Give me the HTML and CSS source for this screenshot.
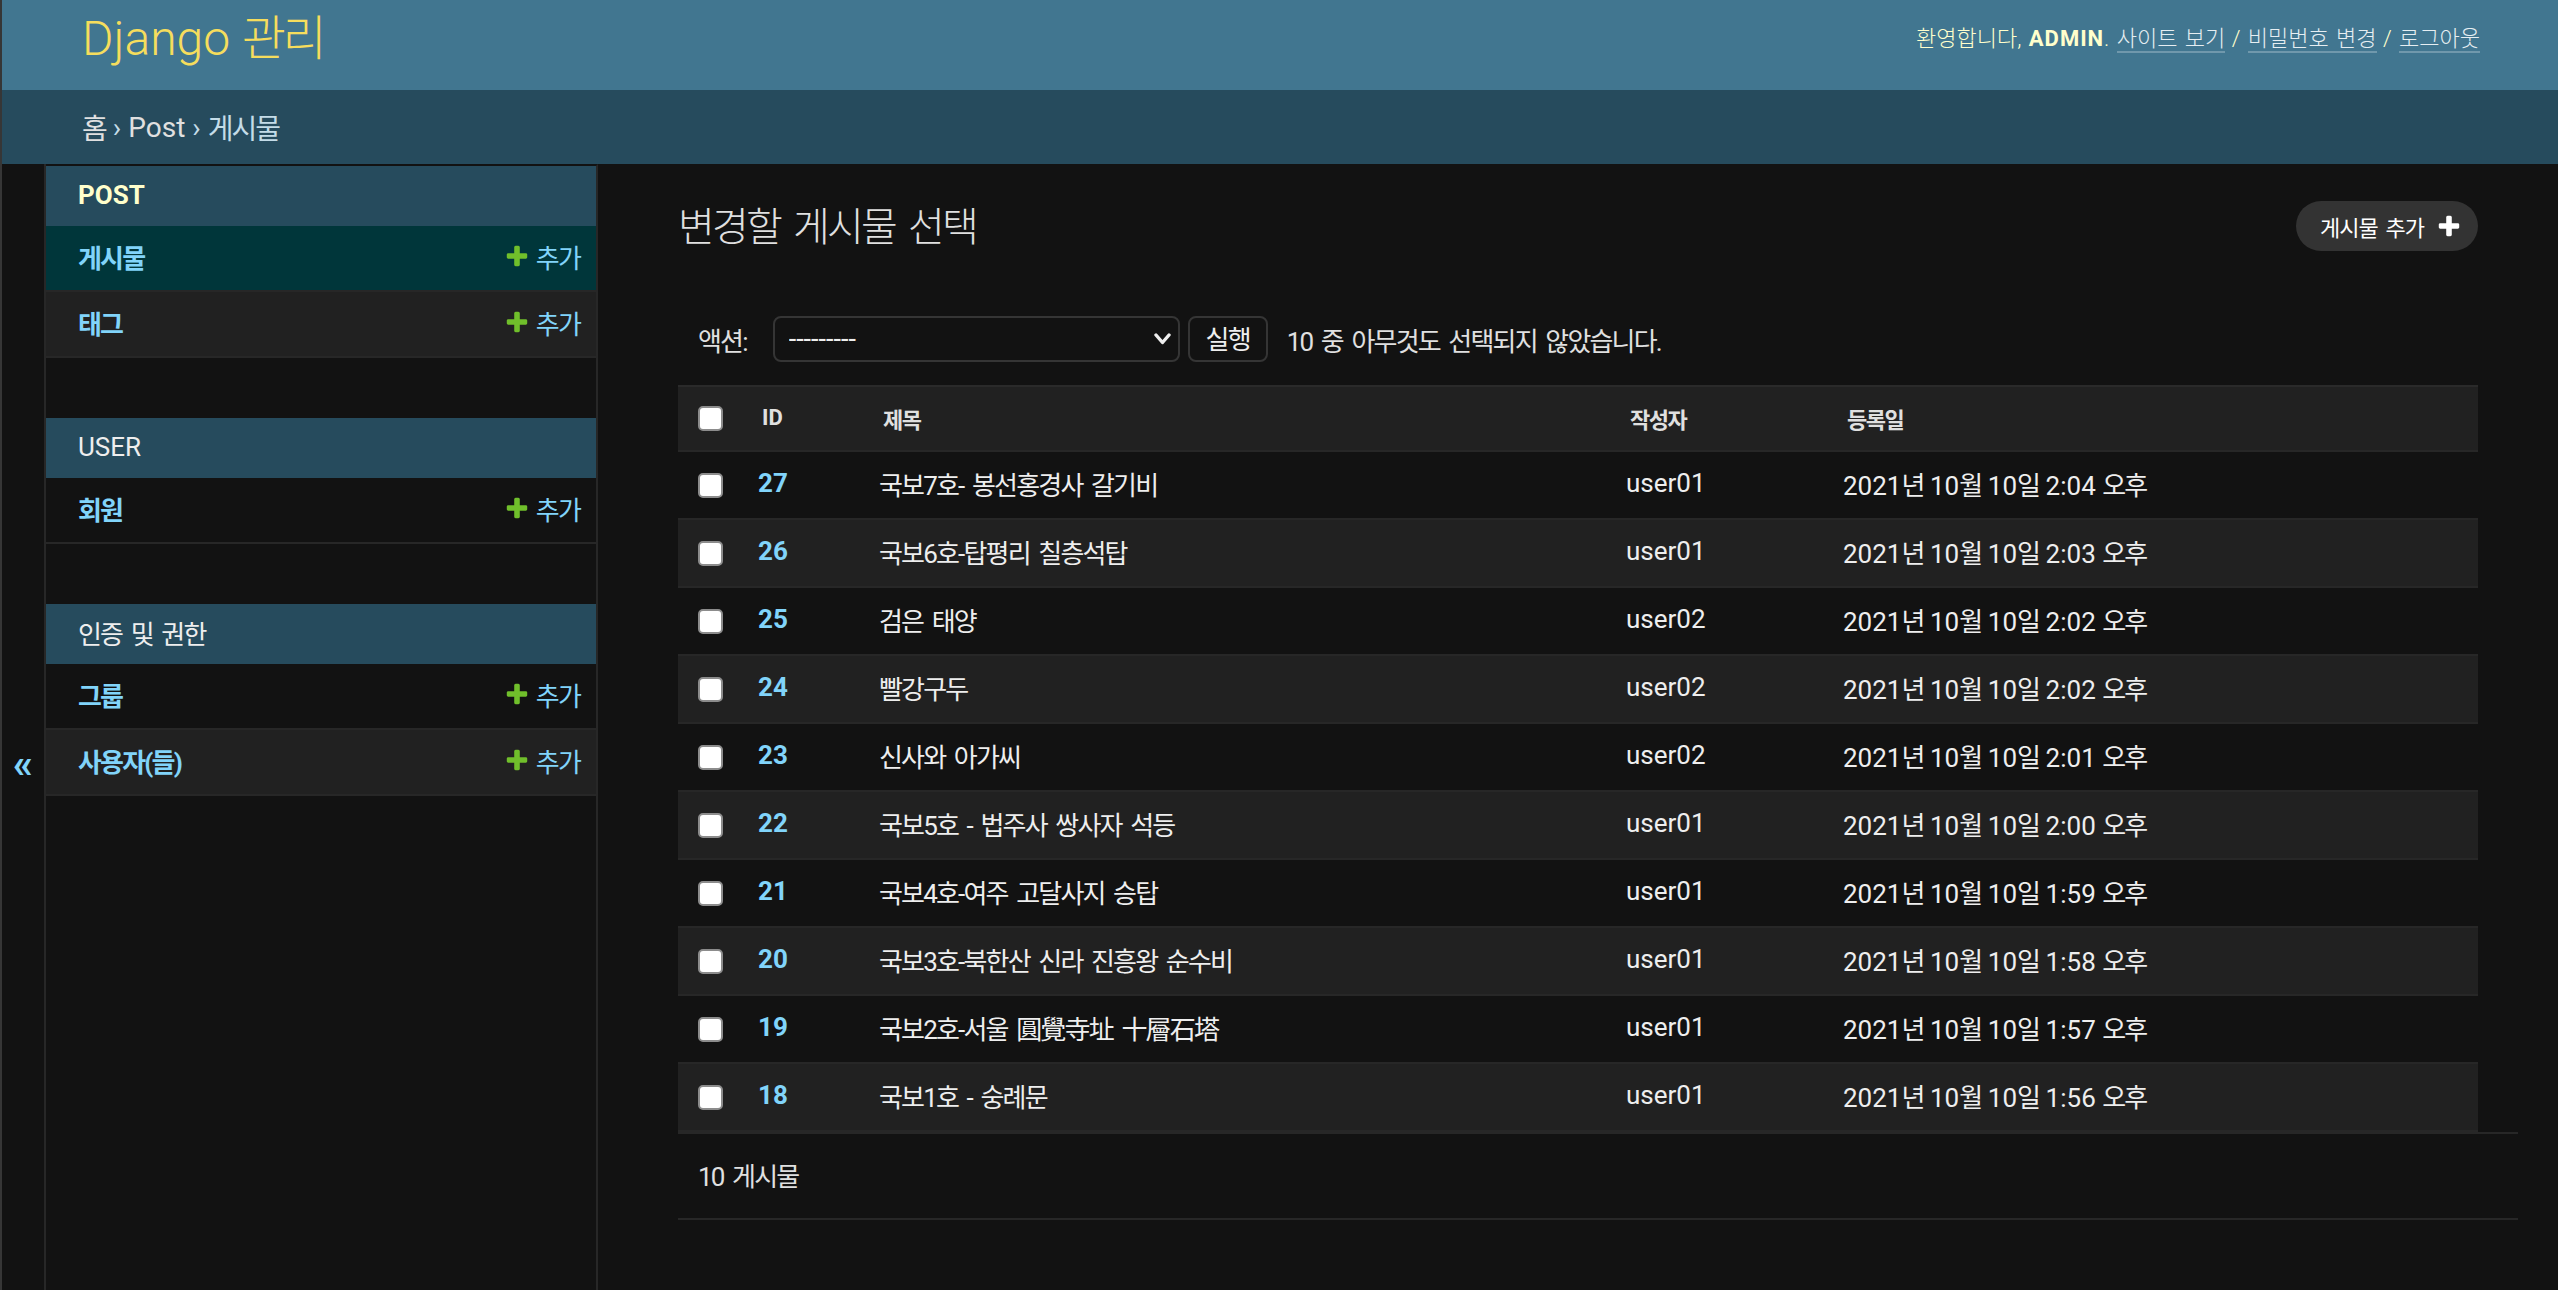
FILE: index.html
```html
<!DOCTYPE html>
<html lang="ko">
<head>
<meta charset="utf-8">
<title>변경할 게시물 선택 | Django 사이트 관리</title>
<link rel="stylesheet" href="styles.css">
</head>
<body>
<div class="page">
  <header class="header">
    <h1 class="site-name"><a href="#">Django <span class="ko">관리</span></a></h1>
    <div class="user-tools">
      <span class="ko">환영합니다</span>, <strong>admin</strong>. <a href="#"><span class="ko">사이트 보기</span></a> / <a href="#"><span class="ko">비밀번호 변경</span></a> / <a href="#"><span class="ko">로그아웃</span></a>
    </div>
  </header>
  <nav class="breadcrumbs">
    <a href="#" class="ko">홈</a><span class="sep">›</span><a href="#">Post</a><span class="sep">›</span><span class="ko crumb-current">게시물</span>
  </nav>
  <div class="main">
    <button class="toggle-nav" type="button">«</button>
    <nav class="sidebar">
      <div class="module current-app">
        <div class="caption"><a href="#" class="section">Post</a></div>
        <div class="model-row current">
          <a href="#" class="model-name ko">게시물</a>
          <a href="#" class="addlink"><svg viewBox="0 0 1792 1792" class="plus"><path fill="#70bf2b" d="M1600 796v192q0 40-28 68t-68 28h-416v416q0 40-28 68t-68 28h-192q-40 0-68-28t-28-68v-416h-416q-40 0-68-28t-28-68v-192q0-40 28-68t68-28h416v-416q0-40 28-68t68-28h192q40 0 68 28t28 68v416h416q40 0 68 28t28 68z"/></svg><span class="ko">추가</span></a>
        </div>
        <div class="model-row even">
          <a href="#" class="model-name ko">태그</a>
          <a href="#" class="addlink"><svg viewBox="0 0 1792 1792" class="plus"><path fill="#70bf2b" d="M1600 796v192q0 40-28 68t-68 28h-416v416q0 40-28 68t-68 28h-192q-40 0-68-28t-28-68v-416h-416q-40 0-68-28t-28-68v-192q0-40 28-68t68-28h416v-416q0-40 28-68t68-28h192q40 0 68 28t28 68v416h416q40 0 68 28t28 68z"/></svg><span class="ko">추가</span></a>
        </div>
      </div>
      <div class="module">
        <div class="caption"><a href="#" class="section">User</a></div>
        <div class="model-row">
          <a href="#" class="model-name ko">회원</a>
          <a href="#" class="addlink"><svg viewBox="0 0 1792 1792" class="plus"><path fill="#70bf2b" d="M1600 796v192q0 40-28 68t-68 28h-416v416q0 40-28 68t-68 28h-192q-40 0-68-28t-28-68v-416h-416q-40 0-68-28t-28-68v-192q0-40 28-68t68-28h416v-416q0-40 28-68t68-28h192q40 0 68 28t28 68v416h416q40 0 68 28t28 68z"/></svg><span class="ko">추가</span></a>
        </div>
      </div>
      <div class="module">
        <div class="caption"><a href="#" class="section ko">인증 및 권한</a></div>
        <div class="model-row">
          <a href="#" class="model-name ko">그룹</a>
          <a href="#" class="addlink"><svg viewBox="0 0 1792 1792" class="plus"><path fill="#70bf2b" d="M1600 796v192q0 40-28 68t-68 28h-416v416q0 40-28 68t-68 28h-192q-40 0-68-28t-28-68v-416h-416q-40 0-68-28t-28-68v-192q0-40 28-68t68-28h416v-416q0-40 28-68t68-28h192q40 0 68 28t28 68v416h416q40 0 68 28t28 68z"/></svg><span class="ko">추가</span></a>
        </div>
        <div class="model-row even">
          <a href="#" class="model-name ko">사용자(들)</a>
          <a href="#" class="addlink"><svg viewBox="0 0 1792 1792" class="plus"><path fill="#70bf2b" d="M1600 796v192q0 40-28 68t-68 28h-416v416q0 40-28 68t-68 28h-192q-40 0-68-28t-28-68v-416h-416q-40 0-68-28t-28-68v-192q0-40 28-68t68-28h416v-416q0-40 28-68t68-28h192q40 0 68 28t28 68v416h416q40 0 68 28t28 68z"/></svg><span class="ko">추가</span></a>
        </div>
      </div>
    </nav>
    <main class="content">
      <div class="content-head">
        <h1 class="title ko">변경할 게시물 선택</h1>
        <a href="#" class="object-tool"><span class="ko">게시물 추가</span><svg viewBox="0 0 1792 1792" class="plus-white"><path fill="#ffffff" d="M1600 796v192q0 40-28 68t-68 28h-416v416q0 40-28 68t-68 28h-192q-40 0-68-28t-28-68v-416h-416q-40 0-68-28t-28-68v-192q0-40 28-68t68-28h416v-416q0-40 28-68t68-28h192q40 0 68 28t28 68v416h416q40 0 68 28t28 68z"/></svg></a>
      </div>
      <form class="changelist">
        <div class="actions">
          <label class="ko">액션:</label>
          <div class="select-wrap">
            <select class="action-select">
              <option>---------</option>
              <option>선택된 게시물 들을 삭제합니다.</option>
            </select>
            <svg class="chevron" viewBox="0 0 17 12"><polyline points="2,2 8.5,9.5 15,2" fill="none" stroke="#eeeeee" stroke-width="3.4" stroke-linecap="round" stroke-linejoin="round"/></svg>
          </div>
          <button type="button" class="run ko">실행</button>
          <span class="counter ko">10 중 아무것도 선택되지 않았습니다.</span>
        </div>
        <table class="results">
          <thead>
            <tr>
              <th class="c-check"><input type="checkbox"></th>
              <th class="c-id">ID</th>
              <th class="c-title ko">제목</th>
              <th class="c-author ko">작성자</th>
              <th class="c-date ko">등록일</th>
            </tr>
          </thead>
          <tbody>
            <tr><td class="c-check"><input type="checkbox"></td><th class="c-id"><a href="#">27</a></th><td class="ko">국보7호- 봉선홍경사 갈기비</td><td>user01</td><td>2021<span class="ko">년</span> 10<span class="ko">월</span> 10<span class="ko">일</span> 2:04 <span class="ko">오후</span></td></tr>
            <tr><td class="c-check"><input type="checkbox"></td><th class="c-id"><a href="#">26</a></th><td class="ko">국보6호-탑평리 칠층석탑</td><td>user01</td><td>2021<span class="ko">년</span> 10<span class="ko">월</span> 10<span class="ko">일</span> 2:03 <span class="ko">오후</span></td></tr>
            <tr><td class="c-check"><input type="checkbox"></td><th class="c-id"><a href="#">25</a></th><td class="ko">검은 태양</td><td>user02</td><td>2021<span class="ko">년</span> 10<span class="ko">월</span> 10<span class="ko">일</span> 2:02 <span class="ko">오후</span></td></tr>
            <tr><td class="c-check"><input type="checkbox"></td><th class="c-id"><a href="#">24</a></th><td class="ko">빨강구두</td><td>user02</td><td>2021<span class="ko">년</span> 10<span class="ko">월</span> 10<span class="ko">일</span> 2:02 <span class="ko">오후</span></td></tr>
            <tr><td class="c-check"><input type="checkbox"></td><th class="c-id"><a href="#">23</a></th><td class="ko">신사와 아가씨</td><td>user02</td><td>2021<span class="ko">년</span> 10<span class="ko">월</span> 10<span class="ko">일</span> 2:01 <span class="ko">오후</span></td></tr>
            <tr><td class="c-check"><input type="checkbox"></td><th class="c-id"><a href="#">22</a></th><td class="ko">국보5호 - 법주사 쌍사자 석등</td><td>user01</td><td>2021<span class="ko">년</span> 10<span class="ko">월</span> 10<span class="ko">일</span> 2:00 <span class="ko">오후</span></td></tr>
            <tr><td class="c-check"><input type="checkbox"></td><th class="c-id"><a href="#">21</a></th><td class="ko">국보4호-여주 고달사지 승탑</td><td>user01</td><td>2021<span class="ko">년</span> 10<span class="ko">월</span> 10<span class="ko">일</span> 1:59 <span class="ko">오후</span></td></tr>
            <tr><td class="c-check"><input type="checkbox"></td><th class="c-id"><a href="#">20</a></th><td class="ko">국보3호-북한산 신라 진흥왕 순수비</td><td>user01</td><td>2021<span class="ko">년</span> 10<span class="ko">월</span> 10<span class="ko">일</span> 1:58 <span class="ko">오후</span></td></tr>
            <tr><td class="c-check"><input type="checkbox"></td><th class="c-id"><a href="#">19</a></th><td class="ko">국보2호-서울 圓覺寺址 十層石塔</td><td>user01</td><td>2021<span class="ko">년</span> 10<span class="ko">월</span> 10<span class="ko">일</span> 1:57 <span class="ko">오후</span></td></tr>
            <tr><td class="c-check"><input type="checkbox"></td><th class="c-id"><a href="#">18</a></th><td class="ko">국보1호 - 숭례문</td><td>user01</td><td>2021<span class="ko">년</span> 10<span class="ko">월</span> 10<span class="ko">일</span> 1:56 <span class="ko">오후</span></td></tr>
          </tbody>
        </table>
        <p class="paginator ko">10 게시물</p>
      </form>
    </main>
  </div>
</div>
</body>
</html>
```

FILE: styles.css
```css
* { box-sizing: border-box; }

html, body {
  margin: 0;
  padding: 0;
}

body {
  background: #121212;
  color: #eeeeee;
  font-family: Roboto, "Noto Sans CJK KR", "Noto Sans", sans-serif;
  font-size: 28px;
  overflow: hidden;
}

a {
  color: #81d4fa;
  text-decoration: none;
}

.ko {
  letter-spacing: -0.07em;
  word-spacing: 0.15em;
}

.page {
  height: 1290px;
  overflow: hidden;
  border-left: 2px solid #363636;
}

/* Header */
.header {
  height: 90px;
  background: #417690;
  display: flex;
  justify-content: space-between;
  align-items: center;
  padding: 0 78px 12px 80px;
}

.site-name {
  margin: 0;
  font-size: 48px;
  font-weight: 300;
  line-height: 56px;
}

.site-name a { color: #f5dd5d; }

.user-tools {
  font-size: 22px;
  font-weight: 300;
  letter-spacing: 1px;
  text-transform: uppercase;
  color: #ffffcc;
  line-height: 30px;
}

.user-tools .ko {
  letter-spacing: 0;
  word-spacing: 2px;
}

.user-tools strong { font-weight: 700; }

.user-tools a {
  color: #e6eef2;
  border-bottom: 2px solid rgba(255, 255, 255, 0.25);
}

/* Breadcrumbs */
.breadcrumbs {
  height: 74px;
  background: #264b5d;
  color: #c4dce8;
  display: flex;
  align-items: center;
  padding: 0 78px 0 80px;
  font-size: 28px;
}

.breadcrumbs a { color: #e0e0e0; }

.breadcrumbs .sep {
  margin: 0 7px;
  color: #c4dce8;
}

.crumb-current { color: #c4dce8; }

/* Main */
.main {
  display: flex;
  min-height: 1200px;
}

.toggle-nav {
  flex: 0 0 44px;
  border: 0;
  border-right: 2px solid #272727;
  background: #121212;
  color: #81d4fa;
  font-family: Roboto, sans-serif;
  font-size: 40px;
  font-weight: 700;
  padding: 0;
  display: flex;
  align-items: center;
  justify-content: center;
}

.sidebar {
  flex: 0 0 552px;
  border-top: 2px solid transparent;
  border-right: 2px solid #272727;
}

.module { margin-bottom: 60px; }

.caption {
  height: 60px;
  background: #264b5d;
  display: flex;
  align-items: center;
  padding: 0 0 3px 32px;
  font-size: 26px;
}

.caption .section {
  color: #eeeeee;
  text-transform: uppercase;
}

.current-app .caption .section {
  color: #ffffcc;
  font-weight: 700;
}

.model-row {
  height: 66px;
  border-bottom: 2px solid #272727;
  display: flex;
  justify-content: space-between;
  align-items: center;
  padding: 0 16px 4px 32px;
  font-size: 26px;
}

.model-row.even { background: #212121; }
.model-row.current { background: #00363a; }

.model-name { font-weight: 700; }

.addlink {
  display: flex;
  align-items: center;
  gap: 6px;
}

.plus {
  width: 26px;
  height: 26px;
}

/* Content */
.content {
  flex: 1;
  padding: 40px 80px 0;
  min-width: 0;
}

.content-head {
  display: flex;
  justify-content: space-between;
  align-items: flex-start;
  margin-bottom: 40px;
}

.title {
  margin: 0;
  font-size: 40px;
  font-weight: 300;
  line-height: 48px;
  color: #e0e0e0;
}

.object-tool {
  margin-top: -3px;
  height: 50px;
  border-radius: 25px;
  background: #333333;
  color: #ffffff;
  font-size: 22px;
  display: flex;
  align-items: center;
  gap: 12px;
  padding: 0 16px 0 24px;
}

.object-tool .ko { letter-spacing: -1px; }

.plus-white {
  width: 26px;
  height: 26px;
}

/* Actions */
.actions {
  display: flex;
  align-items: center;
  padding: 24px 20px 23px;
  font-size: 26px;
  color: #e0e0e0;
}

.select-wrap {
  position: relative;
  margin-left: 26px;
  width: 407px;
  height: 46px;
}

.action-select {
  appearance: none;
  -webkit-appearance: none;
  width: 100%;
  height: 100%;
  background: #121212;
  border: 2px solid #353535;
  border-radius: 8px;
  color: #eeeeee;
  font-family: Roboto, sans-serif;
  font-size: 27px;
  padding: 0 0 0 14px;
  margin: 0;
}

.chevron {
  position: absolute;
  right: 9px;
  top: 17px;
  width: 17px;
  height: 12px;
  pointer-events: none;
}

.run {
  margin-left: 8px;
  width: 80px;
  height: 46px;
  border: 2px solid #353535;
  border-radius: 8px;
  background: #121212;
  color: #eeeeee;
  font-family: Roboto, "Noto Sans CJK KR", sans-serif;
  font-size: 26px;
  padding: 0 0 3px;
}

.counter { margin-left: 19px; }

/* Results table */
.results {
  width: 100%;
  border-collapse: separate;
  border-spacing: 0;
  table-layout: fixed;
}

.results th,
.results td {
  text-align: left;
  vertical-align: middle;
  padding: 0 0 4px 16px;
  font-size: 26px;
  height: 68px;
  border-bottom: 2px solid #272727;
  white-space: nowrap;
}

.results thead th {
  height: 67px;
  background: #212121;
  border-top: 2px solid #2a2a2a;
  border-bottom: 2px solid #272727;
  font-size: 22px;
  font-weight: 700;
  color: #e0e0e0;
  padding: 0 0 2px 20px;
  text-transform: uppercase;
}

.results tbody tr:nth-child(even) { background: #212121; }

.results .c-check {
  width: 64px;
  padding: 0 0 0 20px;
}
.results .c-id { width: 121px; }
.results .c-title { width: 747px; }
.results .c-author { width: 217px; }
.results .c-date { width: 651px; }

.results tbody th a { font-weight: 700; }

.results input[type="checkbox"] {
  appearance: none;
  -webkit-appearance: none;
  display: block;
  width: 25px;
  height: 25px;
  margin: 0;
  background: #ffffff;
  border: 2px solid #8c8c8c;
  border-radius: 5px;
}

.paginator {
  margin: 0 -40px 0 0;
  height: 88px;
  border-top: 2px solid #272727;
  border-bottom: 2px solid #272727;
  display: flex;
  align-items: center;
  padding: 0 20px 4px;
  font-size: 26px;
  color: #e0e0e0;
}
```
